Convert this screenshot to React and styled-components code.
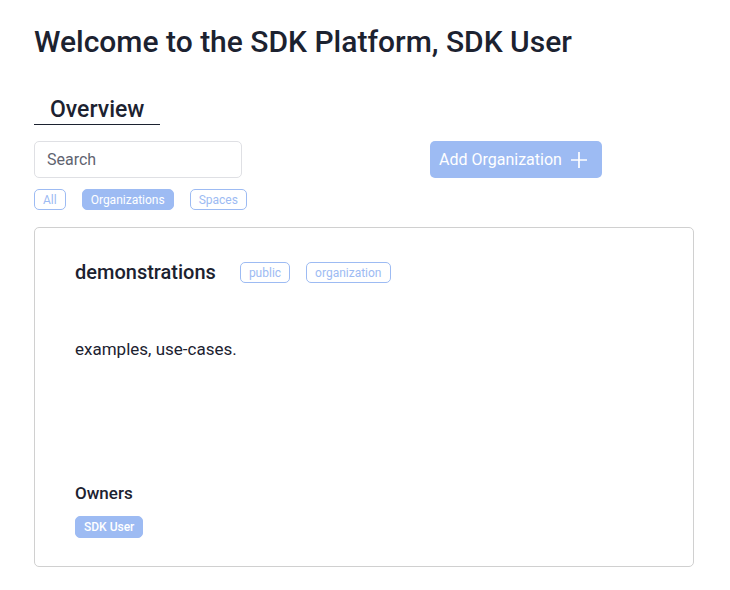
import React from "react";
import styled, { createGlobalStyle } from "styled-components";

const GlobalStyle = createGlobalStyle`
  body {
    margin: 0;
    font-family: Roboto, "Noto Sans", sans-serif;
    color: #1c2230;
    background: #ffffff;
  }
`;

const Page = styled.div`
  padding: 24px 34px;
  width: 660px;
`;

const Title = styled.h1`
  margin: 0;
  font-size: 30px;
  font-weight: 500;
  line-height: 36px;
`;

const Tabs = styled.div`
  margin-top: 36px;
  display: flex;
`;

const Tab = styled.div`
  font-size: 23px;
  font-weight: 500;
  line-height: 28px;
  padding: 0 16px 0 16px;
  border-bottom: 1px solid #1c2230;
`;

const Toolbar = styled.div`
  margin-top: 16px;
  display: grid;
  grid-template-columns: 396px auto;
  align-items: start;
`;

const SearchColumn = styled.div`
  display: flex;
  flex-direction: column;
  gap: 11px;
`;

const SearchInput = styled.input`
  width: 208px;
  height: 37px;
  box-sizing: border-box;
  border: 1px solid #dfe0e4;
  border-radius: 5px;
  padding: 0 12px;
  font-family: Roboto, sans-serif;
  font-size: 16px;
  color: #1c2230;
  outline: none;
  &::placeholder {
    color: #5f6470;
  }
`;

const ChipRow = styled.div`
  display: flex;
  gap: 16px;
`;

const Chip = styled.span`
  display: inline-flex;
  align-items: center;
  height: 21px;
  box-sizing: border-box;
  padding: 0 8px;
  border-radius: 5px;
  font-size: 12px;
  font-weight: 400;
  border: 1px solid #9dbbf3;
  background: ${(p) => (p.$filled ? "#9dbbf3" : "#ffffff")};
  color: ${(p) => (p.$filled ? "#ffffff" : "#9dbbf3")};
`;

const AddButton = styled.button`
  justify-self: start;
  display: inline-flex;
  align-items: center;
  gap: 8px;
  height: 37px;
  padding: 0 14px 0 9px;
  border: none;
  border-radius: 5px;
  background: #9dbbf3;
  color: #ffffff;
  font-family: Roboto, sans-serif;
  font-size: 16px;
  font-weight: 400;
`;

const Card = styled.div`
  margin-top: 17px;
  border: 1px solid #d0d0d0;
  border-radius: 5px;
  height: 340px;
  box-sizing: border-box;
  padding: 34px 40px 28px 40px;
  display: flex;
  flex-direction: column;
`;

const CardHeader = styled.div`
  display: flex;
  align-items: center;
  gap: 16px;
`;

const CardTitle = styled.h2`
  margin: 0 8px 0 0;
  font-size: 20px;
  font-weight: 500;
  line-height: 21px;
`;

const Description = styled.p`
  margin: 56px 0 0 0;
  font-size: 17px;
  line-height: 20px;
`;

const OwnersLabel = styled.h3`
  margin: auto 0 0 0;
  font-size: 17px;
  font-weight: 500;
  line-height: 20px;
`;

const Owners = styled.div`
  margin-top: 13px;
  display: flex;
  gap: 8px;
`;

const OwnerChip = styled(Chip)`
  height: 22px;
  font-weight: 500;
`;

const Plus = () => (
  <svg width="18" height="18" viewBox="0 0 18 18" fill="none">
    <path d="M9 1v16M1 9h16" stroke="#ffffff" strokeWidth="1.7" />
  </svg>
);

export default function App() {
  return (
    <>
      <GlobalStyle />
      <Page>
        <Title>Welcome to the SDK Platform, SDK User</Title>
        <Tabs>
          <Tab>Overview</Tab>
        </Tabs>
        <Toolbar>
          <SearchColumn>
            <SearchInput placeholder="Search" />
            <ChipRow>
              <Chip>All</Chip>
              <Chip $filled>Organizations</Chip>
              <Chip>Spaces</Chip>
            </ChipRow>
          </SearchColumn>
          <AddButton>
            Add Organization
            <Plus />
          </AddButton>
        </Toolbar>
        <Card>
          <CardHeader>
            <CardTitle>demonstrations</CardTitle>
            <Chip>public</Chip>
            <Chip>organization</Chip>
          </CardHeader>
          <Description>examples, use-cases.</Description>
          <OwnersLabel>Owners</OwnersLabel>
          <Owners>
            <OwnerChip $filled>SDK User</OwnerChip>
          </Owners>
        </Card>
      </Page>
    </>
  );
}
